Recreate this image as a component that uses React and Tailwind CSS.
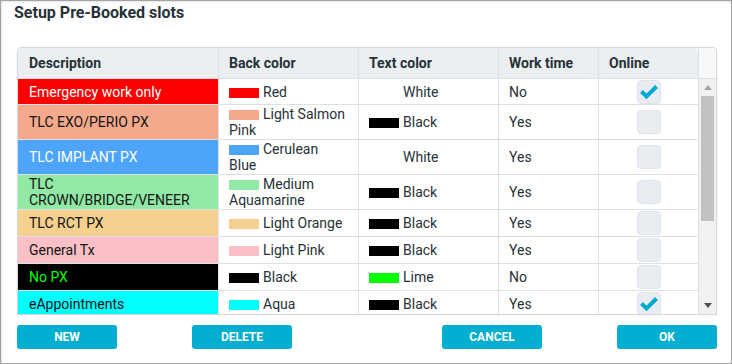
import { useState } from "react";

const rows = [
  { desc: "Emergency work only", bg: "bg-[#ff0000]", fg: "text-white", back: "Red", backSw: "bg-[#ff0000]", text: "White", textSw: "bg-white", work: "No", online: true, h: "h-[26px]" },
  { desc: "TLC EXO/PERIO PX", bg: "bg-[#f5a98c]", fg: "text-[#141414]", back: "Light Salmon Pink", backSw: "bg-[#f5a98c]", text: "Black", textSw: "bg-black", work: "Yes", online: false, h: "h-[35px]" },
  { desc: "TLC IMPLANT PX", bg: "bg-[#4da4fb]", fg: "text-white", back: "Cerulean Blue", backSw: "bg-[#4da4fb]", text: "White", textSw: "bg-white", work: "Yes", online: false, h: "h-[35px]" },
  { desc: "TLC CROWN/BRIDGE/VENEER", bg: "bg-[#90e9a4]", fg: "text-[#141414]", back: "Medium Aquamarine", backSw: "bg-[#90e9a4]", text: "Black", textSw: "bg-black", work: "Yes", online: false, h: "h-[35px]" },
  { desc: "TLC RCT PX", bg: "bg-[#f5d08e]", fg: "text-[#141414]", back: "Light Orange", backSw: "bg-[#f5d08e]", text: "Black", textSw: "bg-black", work: "Yes", online: false, h: "h-[27px]" },
  { desc: "General Tx", bg: "bg-[#fbbfc6]", fg: "text-[#141414]", back: "Light Pink", backSw: "bg-[#fbbfc6]", text: "Black", textSw: "bg-black", work: "Yes", online: false, h: "h-[27px]" },
  { desc: "No PX", bg: "bg-black", fg: "text-[#00ff00]", back: "Black", backSw: "bg-black", text: "Lime", textSw: "bg-[#00ff00]", work: "No", online: false, h: "h-[27px]" },
  { desc: "eAppointments", bg: "bg-[#00ffff]", fg: "text-[#141414]", back: "Aqua", backSw: "bg-[#00ffff]", text: "Black", textSw: "bg-black", work: "Yes", online: true, h: "h-[27px]" },
];

const cols = "grid grid-cols-[201px_140px_140px_100px_99px]";

function Check({ checked, onClick }) {
  return (
    <button
      onClick={onClick}
      className="w-[24px] h-[24px] rounded-[4px] bg-[#e9edf2] border border-[#dfe4ea] flex items-center justify-center"
    >
      {checked && (
        <svg width="20" height="16" viewBox="0 0 20 16">
          <polyline points="2.5,7.5 7.5,12.5 17.5,2.5" fill="none" stroke="#00a9cf" strokeWidth="4" />
        </svg>
      )}
    </button>
  );
}

function Swatch({ cls }) {
  return <span className={`inline-block w-[30px] h-[10px] mr-[4px] align-[-1px] ${cls}`} />;
}

export default function App() {
  const [data, setData] = useState(rows);

  const toggle = (i) =>
    setData((prev) => prev.map((r, j) => (j === i ? { ...r, online: !r.online } : r)));

  return (
    <div className="w-[732px] h-[364px] bg-white border border-[#a3a3a3] shadow-[inset_1px_1px_2px_rgba(0,0,0,0.12)] font-['Roboto',sans-serif] text-[#263238] flex flex-col">
      {/* Title */}
      <div className="h-[46px] pl-[13px] pt-[1px] text-[16px] font-bold leading-[22px] text-[#263238]">
        Setup Pre-Booked slots
      </div>

      {/* Table */}
      <div className="ml-[16px] mr-[14px] h-[268px] border border-[#d3d8dc] rounded-t-[4px] flex overflow-hidden shadow-[0_0_2px_rgba(0,0,0,0.08)]">
        <div className="w-[680px] flex flex-col">
          {/* Header */}
          <div className={`${cols} h-[31px] bg-[#eceff1] border-b border-[#dde1e4] rounded-tr-[4px] text-[14px] font-bold`}>
            {["Description", "Back color", "Text color", "Work time", "Online"].map((h, i) => (
              <div
                key={h}
                className={`flex items-center ${i === 0 ? "pl-[11px]" : "pl-[10px]"} ${i < 4 ? "border-r border-[#dde1e4]" : ""}`}
              >
                {h}
              </div>
            ))}
          </div>

          {/* Body */}
          <div className="flex-1 overflow-hidden text-[14px] leading-[16px]">
            {data.map((r, i) => (
              <div key={r.desc} className={`${cols} ${r.h} border-b border-[#dde1e4]`}>
                <div className={`flex items-center pl-[11px] pr-[8px] border-r border-[#dde1e4] ${r.bg} ${r.fg}`}>
                  {r.desc}
                </div>
                <div className="flex items-center pl-[10px] pr-[12px] border-r border-[#dde1e4]">
                  <div>
                    <Swatch cls={r.backSw} />
                    {r.back}
                  </div>
                </div>
                <div className="flex items-center pl-[10px] pr-[12px] border-r border-[#dde1e4]">
                  <div>
                    <Swatch cls={r.textSw} />
                    {r.text}
                  </div>
                </div>
                <div className="flex items-center pl-[10px] border-r border-[#dde1e4]">{r.work}</div>
                <div className="flex items-center justify-center">
                  <Check checked={r.online} onClick={() => toggle(i)} />
                </div>
              </div>
            ))}
          </div>
        </div>

        {/* Scrollbar */}
        <div className="w-[18px] border-l border-[#dde1e4] flex flex-col">
          <div className="h-[31px] bg-[#f7f8f9] border-b border-[#dde1e4]" />
          <div className="flex-1 bg-[#f1f1f1] flex flex-col items-center">
            <div className="h-[17px] flex items-center justify-center">
              <svg width="8" height="5" viewBox="0 0 8 5">
                <polygon points="0,5 4,0 8,5" fill="#a3a3a3" />
              </svg>
            </div>
            <div className="w-[13px] h-[125px] bg-[#c1c1c1]" />
            <div className="flex-1" />
            <div className="h-[17px] flex items-center justify-center">
              <svg width="8" height="5" viewBox="0 0 8 5">
                <polygon points="0,0 8,0 4,5" fill="#505050" />
              </svg>
            </div>
          </div>
        </div>
      </div>

      {/* Buttons */}
      <div className="ml-[16px] mr-[14px] mt-[10px] flex justify-between">
        <div className="flex gap-[75px]">
          <button className="w-[100px] h-[24px] rounded-[3px] bg-[#00aecf] text-white text-[12px] font-bold">NEW</button>
          <button className="w-[100px] h-[24px] rounded-[3px] bg-[#00aecf] text-white text-[12px] font-bold">DELETE</button>
        </div>
        <div className="flex gap-[75px]">
          <button className="w-[100px] h-[24px] rounded-[3px] bg-[#00aecf] text-white text-[12px] font-bold">CANCEL</button>
          <button className="w-[100px] h-[24px] rounded-[3px] bg-[#00aecf] text-white text-[12px] font-bold">OK</button>
        </div>
      </div>
    </div>
  );
}
